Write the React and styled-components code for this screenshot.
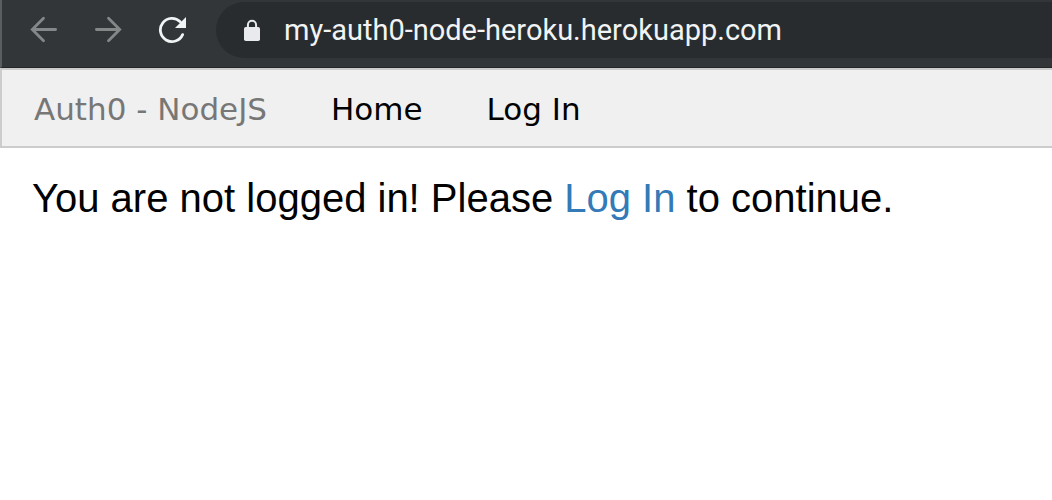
import React from "react";
import styled, { createGlobalStyle } from "styled-components";

const GlobalStyle = createGlobalStyle`
  *, *::before, *::after { box-sizing: border-box; }
  body {
    margin: 0;
    background: #ffffff;
    color: #000000;
    font-family: "Liberation Sans", Arial, sans-serif;
  }
`;

const Toolbar = styled.header`
  display: flex;
  align-items: center;
  padding: 2px 0 9px 10px;
  background: #323639;
  border-left: 2px solid #5b5d5f;
  border-bottom: 1px solid #242628;
`;

const ToolButton = styled.button`
  display: flex;
  align-items: center;
  justify-content: center;
  flex: none;
  width: 64px;
  height: 56px;
  padding: 0;
  border: 0;
  background: none;
  color: ${({ $active }) => ($active ? "#f1f3f4" : "#858889")};
`;

const AddressBar = styled.label`
  display: flex;
  align-items: center;
  flex: 1;
  min-width: 0;
  gap: 24px;
  height: 56px;
  margin-left: 12px;
  padding-left: 28px;
  border-radius: 28px 0 0 28px;
  background: #282c2f;
  color: #e8eaed;
`;

const AddressInput = styled.input`
  flex: 1;
  min-width: 0;
  padding: 0;
  border: 0;
  outline: 0;
  background: none;
  color: #f1f3f4;
  font-family: Roboto, sans-serif;
  font-size: 29px;
  line-height: 36px;
`;

const NavBar = styled.nav`
  display: flex;
  flex-wrap: wrap;
  background: #f0f0f0;
  border: 2px solid #cccccc;
  border-right: 0;
  font-family: Verdana, "DejaVu Sans", sans-serif;
  font-size: 31px;
  line-height: 36px;
`;

const Brand = styled.span`
  padding: 21px 32px 19px;
  color: #777777;
`;

const NavLink = styled.a`
  padding: 21px 32px 19px;
  color: #000000;
  text-decoration: none;
`;

const Content = styled.main`
  padding: 26px 32px;
`;

const Message = styled.p`
  margin: 0;
  font-size: 40px;
  line-height: 48px;
`;

const TextLink = styled.a`
  color: #337ab7;
  text-decoration: none;
`;

const Arrow = ({ forward }) => (
  <svg
    width="28"
    height="28"
    viewBox="0 0 28 28"
    fill="none"
    stroke="currentColor"
    strokeWidth="2.8"
    strokeLinecap="round"
    aria-hidden="true"
  >
    {forward ? (
      <path d="M2.4 13.5H25.5M14.5 2.3L25.7 13.5L14.5 24.7" />
    ) : (
      <path d="M25.6 13.5H2.5M13.5 2.3L2.3 13.5L13.5 24.7" />
    )}
  </svg>
);

const Reload = () => (
  <svg width="28" height="28" viewBox="0 0 28 28" fill="none" aria-hidden="true">
    <path d="M22.2 5.8A11.6 11.6 0 1 0 24.6 18.6" stroke="currentColor" strokeWidth="2.8" strokeLinecap="round" />
    <path d="M28 1V12H17Z" fill="currentColor" />
  </svg>
);

const Lock = () => (
  <svg width="16" height="22" viewBox="0 0 16 22" fill="none" aria-hidden="true">
    <path d="M3.9 8V5.9a4.1 4.1 0 0 1 8.2 0V8" stroke="currentColor" strokeWidth="2" />
    <rect x="0" y="8" width="16" height="14" rx="1.8" fill="currentColor" />
  </svg>
);

export default function App() {
  return (
    <>
      <GlobalStyle />
      <Toolbar>
        <ToolButton type="button" aria-label="Back">
          <Arrow />
        </ToolButton>
        <ToolButton type="button" aria-label="Forward">
          <Arrow forward />
        </ToolButton>
        <ToolButton type="button" aria-label="Reload" $active>
          <Reload />
        </ToolButton>
        <AddressBar>
          <Lock />
          <AddressInput type="text" aria-label="Address" defaultValue="my-auth0-node-heroku.herokuapp.com" spellCheck={false} />
        </AddressBar>
      </Toolbar>
      <NavBar>
        <Brand>Auth0 - NodeJS</Brand>
        <NavLink href="#home">Home</NavLink>
        <NavLink href="#login">Log In</NavLink>
      </NavBar>
      <Content>
        <Message>
          You are not logged in! Please <TextLink href="#login">Log In</TextLink> to continue.
        </Message>
      </Content>
    </>
  );
}
